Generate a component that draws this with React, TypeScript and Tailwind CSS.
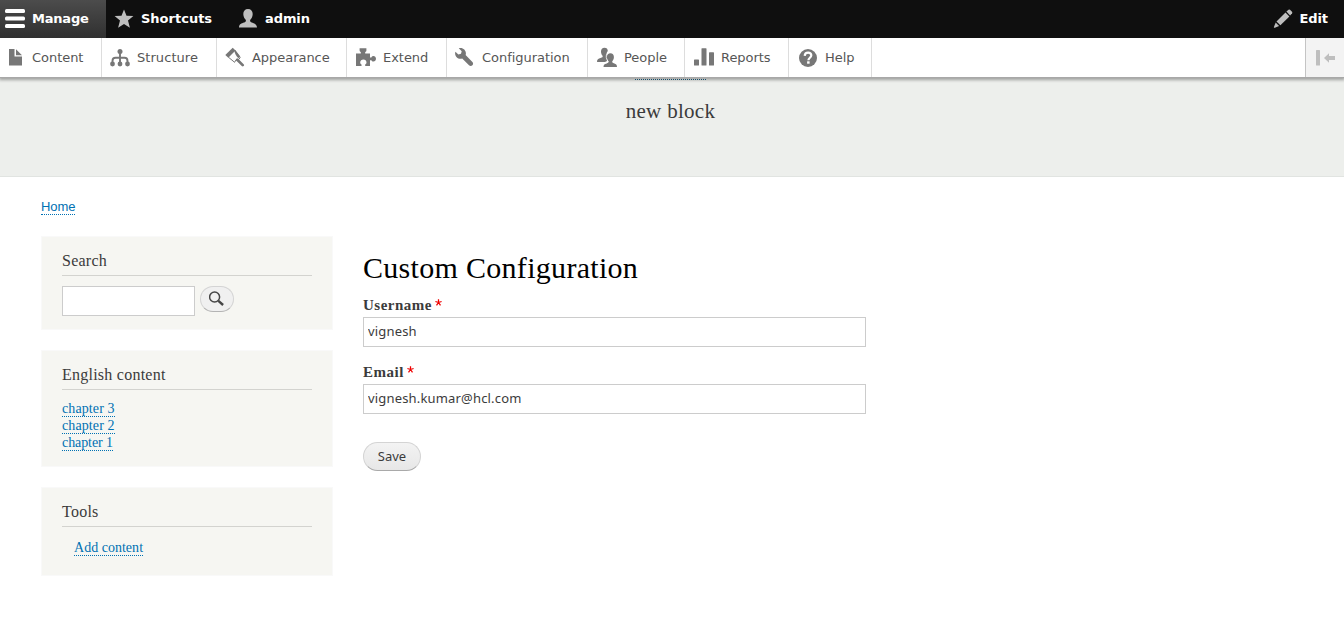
import type { ReactNode } from "react";

function Icon({ children, className = "" }: { children: ReactNode; className?: string }) {
  return (
    <svg viewBox="0 0 20 20" fill="currentColor" className={`block size-5 shrink-0 ${className}`}>
      {children}
    </svg>
  );
}

const icons = {
  menu: (
    <>
      <rect x="0" y="1" width="20" height="4" rx="1.5" />
      <rect x="0" y="8.5" width="20" height="4" rx="1.5" />
      <rect x="0" y="16" width="20" height="4" rx="1.5" />
    </>
  ),
  star: <path d="M10 .4l2.500 6.400 6.900.3-5.400 4.300 1.900 7.300L10 14.900l-5.900 3.800 1.900-7.300L.6 7.100l6.900-.3z" />,
  user: (
    <path d="M10 0c3 0 4.700 2 4.700 5 0 2.600-1.200 4.600-2.400 5.700-.6 1.700.1 2.300 1.600 2.900 2.600 1 4.900 1.500 5.100 4.800H1c.2-3.300 2.500-3.800 5.100-4.800 1.500-.6 2.200-1.200 1.600-2.900C6.500 9.600 5.300 7.600 5.300 5c0-3 1.700-5 4.700-5z" />
  ),
  file: (
    <>
      <path d="M4 2h5.500v7.500H17V18.500H4z" />
      <path d="M11 2.200l6 6h-6z" />
    </>
  ),
  structure: (
    <>
      <circle cx="10" cy="4.500" r="2.500" />
      <circle cx="2.500" cy="17" r="2.400" />
      <circle cx="10" cy="17" r="2.400" />
      <circle cx="17.500" cy="17" r="2.400" />
      <path d="M10 4v13M2.500 17v-3q0-3.200 3-3.200h9q3 0 3 3.200V17" fill="none" stroke="currentColor" strokeWidth="1.900" />
    </>
  ),
  brush: (
    <>
      <path d="M7.700.8L.3 8l3 2.700 7.200-7.300z" />
      <path d="M3.300 10.100l6.300 5.200 1.200-2.200 3-.8 1.400-1.600-5.400-7.300" fill="none" stroke="currentColor" strokeWidth="1" />
      <path d="M10.300 3l5 6.500-1.800 1.800c-2.300-2-3.500-4.300-4.200-7.200z" />
      <path d="M12.300 12.800l5.400 5.300" fill="none" stroke="currentColor" strokeWidth="2.700" strokeLinecap="round" />
    </>
  ),
  puzzle: (
    <path d="M0 6.500h4.800V5C4.100 4.600 3.600 4.100 3.600 3.400V1.200h6.800v2.200c0 .7-.5 1.200-1.200 1.600v1.500H14v4h1.400c.4-.8 1-1.400 2-1.400 1.500 0 2.600 1.200 2.600 2.700s-1.100 2.800-2.600 2.800c-1 0-1.600-.6-2-1.400H14V19H9.200v-1.600c.8-.5 1.300-1.100 1.300-2 0-1.800-1.300-2.900-3.100-2.900s-3.200 1.100-3.200 2.900c0 .9.500 1.500 1.300 2V19H0z" />
  ),
  wrench: (
    <path
      transform="translate(.1 1) scale(1.200)"
      d="M14.416 11.586l-5.666-5.665c.15-.449.252-.921.252-1.421 0-2.485-2.016-4.500-4.502-4.500-.505 0-.981.102-1.434.255l2.431 2.431-.588 2.196-2.196.588-2.445-2.445c-.162.464-.268.956-.268 1.475 0 2.486 2.014 4.500 4.500 4.500.5 0 .972-.102 1.421-.251l5.667 5.665c.781.781 2.047.781 2.828 0s.781-2.047 0-2.828z"
    />
  ),
  people: (
    <>
      <path d="M7.500.8c2.100 0 3.300 1.200 3.300 3.300-1.400 1.200-1.700 4-.6 6.300l-.2 3.700-2 1H0c0-2.700 1.300-3.300 3.500-4 1.900-.6 2.500-1.100 2.100-2.300C4.500 7.700 4 6.200 4 4.500 4 2.200 5.300.8 7.500.8z" />
      <path d="M13.400 6.200c2.200 0 3.500 1.400 3.500 3.700 0 1.700-.5 3.100-1.600 4.300-.4 1.200.2 1.700 2.100 2.300 1.500.5 2.600 1.200 2.600 3.500H6.500c0-2.300 1.200-3 2.900-3.500 1.900-.6 2.500-1.100 2.100-2.300-1.100-1.200-1.600-2.600-1.600-4.300 0-2.300 1.300-3.700 3.500-3.700z" />
      <path d="M12.400 5.400c-2.400.6-3.400 2.300-3.100 5 .2 1.600.7 2.800 1.500 3.900.3.900-.7 1.300-2 1.700" fill="none" stroke="#fff" strokeWidth=".8" />
    </>
  ),
  bars: (
    <>
      <rect x="0" y="12.500" width="5" height="6" rx=".6" />
      <rect x="7.500" y="1.200" width="5" height="17.300" rx=".6" />
      <rect x="15" y="5.300" width="5" height="13.200" rx=".6" />
    </>
  ),
  help: (
    <>
      <circle cx="10" cy="11" r="9" />
      <path d="M6.700 8.900c.1-2.200 1.500-3.300 3.400-3.300 2 0 3.200 1.200 3.200 2.700 0 2.500-2.900 2.400-2.900 5" fill="none" stroke="#fff" strokeWidth="2.200" />
      <rect x="9.100" y="14.300" width="2.500" height="2.400" fill="#fff" />
    </>
  ),
  pencil: (
    <>
      <path d="M13.400 2.600L15.500.7q.8-.5 1.500.1l2 2q.6.7.1 1.500l-2 2.100z" />
      <path d="M12.500 3.600l3.900 3.900-9 8.800-3.900-3.900z" />
      <path d="M2.700 13.500l3.400 3.500-4.200 1.700q-1.400.5-.9-.9z" />
    </>
  ),
};

const tray: { label: string; icon: ReactNode; width: string; pad: string; tracking?: string }[] = [
  { label: "Content", icon: icons.file, width: "w-[102px]", pad: "pl-[5px]" },
  { label: "Structure", icon: icons.structure, width: "w-[115px]", pad: "pl-[8px]", tracking: "tracking-[0.06px]" },
  { label: "Appearance", icon: icons.brush, width: "w-[130px]", pad: "pl-[8px]" },
  { label: "Extend", icon: icons.puzzle, width: "w-[100px]", pad: "pl-[9px]" },
  { label: "Configuration", icon: icons.wrench, width: "w-[141px]", pad: "pl-[8px]" },
  { label: "People", icon: icons.people, width: "w-[97px]", pad: "pl-[9px]" },
  { label: "Reports", icon: icons.bars, width: "w-[104px]", pad: "pl-[9px]" },
  { label: "Help", icon: icons.help, width: "w-[83px]", pad: "pl-[9px]" },
];

function Toolbar() {
  return (
    <header className="relative z-10 h-[78px] font-['DejaVu_Sans',sans-serif] text-[13px] shadow-[0_1px_3px_1px_rgba(0,0,0,0.33)]">
      <nav className="flex h-[38px] items-center bg-[#0f0f0f] font-bold tracking-[-0.1px] text-white">
        <div className="flex h-full w-[106px] items-center gap-[7px] bg-linear-to-b from-[#4c4c4c] to-[#303030] pl-[5px] tracking-[-0.2px]">
          <Icon className="relative -top-px">{icons.menu}</Icon>Manage
        </div>
        <div className="flex w-[124px] items-center gap-[7px] pl-[8px] tracking-[0px]">
          <Icon className="text-[#bebebe]">{icons.star}</Icon>Shortcuts
        </div>
        <div className="flex items-center gap-[7px] pl-[8px]">
          <Icon className="text-[#bebebe]">{icons.user}</Icon>admin
        </div>
        <div className="ml-auto flex items-center gap-[7px] pr-[16px]">
          <Icon className="relative -left-px text-[#bebebe]">{icons.pencil}</Icon>
          <span className="-ml-px">Edit</span>
        </div>
      </nav>
      <nav className="flex h-10 border-b border-[#a8a8a8] bg-white text-[#565656]">
        {tray.map((t) => (
          <div
            key={t.label}
            className={`flex items-center gap-[7px] border-r border-[#ddd] ${t.width} ${t.pad} ${t.tracking ?? "tracking-[-0.04px]"}`}
          >
            <Icon className="relative -top-px text-[#777]">{t.icon}</Icon>
            {t.label}
          </div>
        ))}
        <div className="ml-auto flex w-[39px] items-center border-l border-[#c4c4c4] bg-[#f3f3f3] pl-[10px] text-[#bebebe]">
          <Icon>
            <rect x="0" y="2" width="4" height="15.500" rx=".5" />
            <path d="M8 10l5-4.700v2.700h6v4h-6v2.700z" />
          </Icon>
        </div>
      </nav>
    </header>
  );
}

function Block({ title, className, children }: { title: string; className: string; children: ReactNode }) {
  return (
    <section className={`border border-[#f9f9f9] bg-[#f6f6f2] px-5 pt-[13px] ${className}`}>
      <h2 className="h-[26px] border-b border-[#d3d3cf] text-[16px] leading-[22px] tracking-[0.24px] text-[#3b3b3b]">{title}</h2>
      {children}
    </section>
  );
}

function Link({ children, className = "" }: { children: ReactNode; className?: string }) {
  return (
    <a href="#" className={`block w-fit border-b border-dotted border-[#0071b3] text-[#0071b3] ${className}`}>
      {children}
    </a>
  );
}

function Field({ label, value, className = "" }: { label: string; value: string; className?: string }) {
  return (
    <div className={className}>
      <label className="flex h-[21px] items-start gap-[3px] text-[15px] leading-[18px] font-bold tracking-[0.5px]">
        {label}
        <svg viewBox="0 0 7 7" className="mt-[3px] size-[7px]" aria-hidden="true">
          <path d="M3.500 3.500V.2M3.500 3.500L.4 2.500M3.500 3.500l3.100-1M3.500 3.500L1.500 6.300M3.500 3.500l2 2.800" stroke="#e00" strokeWidth="1.250" />
        </svg>
      </label>
      <input
        defaultValue={value}
        className="block h-[30px] w-[503px] border border-[#ccc] bg-white px-1 pb-[2px] font-['Noto_Sans','Open_Sans',sans-serif] text-[13px] tracking-[0.17px] text-[#3b3b3b] outline-none"
      />
    </div>
  );
}

export default function App() {
  return (
    <div className="h-[634px] overflow-hidden bg-white font-['Liberation_Serif',serif] text-[#3b3b3b]">
      <Toolbar />
      <div className="flex h-[99px] flex-col items-center border-b border-[#e1e4e1] bg-[#edefec]">
        <div className="relative z-20 mt-px mr-[3px] w-[71px] border-b border-dotted border-[#18506d]" />
        <p className="mt-[17px] mr-[3px] text-[21px] leading-[28px] tracking-[0.3px]">new block</p>
      </div>
      <div className="pt-[21px] pl-[41px]">
        <Link className="h-[17px] font-['Liberation_Sans',sans-serif] text-[13px] leading-[17px] tracking-[-0.1px]">Home</Link>
      </div>
      <div className="mt-[21px] flex gap-[30px] pl-[41px]">
        <aside className="flex w-[292px] flex-col gap-5">
          <Block title="Search" className="h-[94px]">
            <div className="mt-[10px] flex gap-[5px]">
              <input aria-label="Search" className="h-[30px] w-[133px] border border-[#ccc] bg-white outline-none" />
              <button aria-label="Search" className="flex h-[26px] w-[34px] items-center justify-center rounded-full border border-[#d4d4d4] border-b-[#b4b4b4] bg-[#f0f0f0]">
                <svg viewBox="0 0 16 16" className="mb-px size-4" fill="none" stroke="#464646">
                  <circle cx="5.600" cy="6" r="5" strokeWidth="1.500" />
                  <path d="M9.400 9.800l4.700 4.200" strokeWidth="2.400" />
                </svg>
              </button>
            </div>
          </Block>
          <Block title="English content" className="h-[117px]">
            <ul className="mt-[10px] text-[14px] leading-[17px]">
              <li className="h-[17px]"><Link className="h-[17px] tracking-[0.1px]">chapter 3</Link></li>
              <li className="h-[17px]"><Link className="h-[17px] tracking-[0.1px]">chapter 2</Link></li>
              <li className="h-[17px]"><Link className="h-[17px] tracking-[-0.08px]">chapter 1</Link></li>
            </ul>
          </Block>
          <Block title="Tools" className="h-[89px]">
            <Link className="mt-[12px] ml-3 h-[17px] text-[14px] leading-[17px] tracking-[0.02px]">Add content</Link>
          </Block>
        </aside>
        <main className="pt-[12px]">
          <h1 className="h-[48px] text-[30px] leading-[40px] tracking-[0.3px] text-black">Custom Configuration</h1>
          <Field label="Username" value="vignesh" />
          <Field label="Email" value="vignesh.kumar@hcl.com" className="mt-[16px]" />
          <button className="mt-[28px] h-[29px] w-[58px] rounded-full border border-[#d4d4d4] border-b-[#a9a9a9] bg-linear-to-b from-[#f3f3f3] to-[#e7e7e7] pt-px font-['Noto_Sans','Open_Sans',sans-serif] text-[13px] text-[#3b3b3b]">
            Save
          </button>
        </main>
      </div>
    </div>
  );
}
